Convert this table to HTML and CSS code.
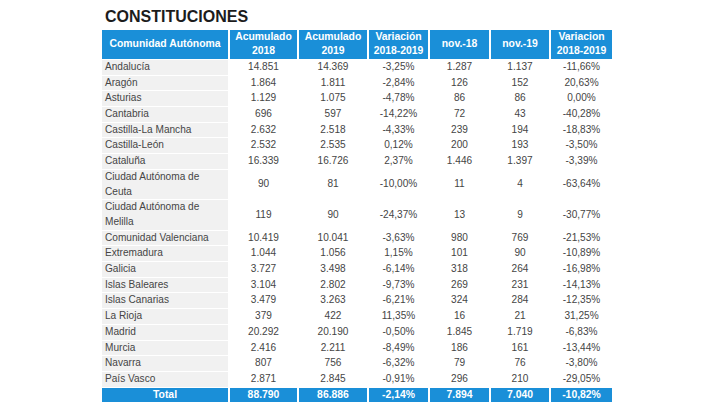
FILE: index.html
```html
<!DOCTYPE html>
<html lang="es">
<head>
<meta charset="utf-8">
<link rel="stylesheet" href="styles.css">
</head>
<body>
<div class="page">
  <h1 class="title">CONSTITUCIONES</h1>
  <table class="data">
    <colgroup>
      <col class="c-name"><col class="c-acc18"><col class="c-acc19"><col class="c-var"><col class="c-m18"><col class="c-m19"><col class="c-var2">
    </colgroup>
    <thead>
      <tr>
        <th>Comunidad Autónoma</th>
        <th>Acumulado<br>2018</th>
        <th>Acumulado<br>2019</th>
        <th>Variación<br>2018-2019</th>
        <th>nov.-18</th>
        <th>nov.-19</th>
        <th>Variacion<br>2018-2019</th>
      </tr>
    </thead>
    <tbody>
      <tr><td class="name">Andalucía</td><td>14.851</td><td>14.369</td><td>-3,25%</td><td>1.287</td><td>1.137</td><td>-11,66%</td></tr>
      <tr><td class="name">Aragón</td><td>1.864</td><td>1.811</td><td>-2,84%</td><td>126</td><td>152</td><td>20,63%</td></tr>
      <tr><td class="name">Asturias</td><td>1.129</td><td>1.075</td><td>-4,78%</td><td>86</td><td>86</td><td>0,00%</td></tr>
      <tr><td class="name">Cantabria</td><td>696</td><td>597</td><td>-14,22%</td><td>72</td><td>43</td><td>-40,28%</td></tr>
      <tr><td class="name">Castilla-La Mancha</td><td>2.632</td><td>2.518</td><td>-4,33%</td><td>239</td><td>194</td><td>-18,83%</td></tr>
      <tr><td class="name">Castilla-León</td><td>2.532</td><td>2.535</td><td>0,12%</td><td>200</td><td>193</td><td>-3,50%</td></tr>
      <tr><td class="name">Cataluña</td><td>16.339</td><td>16.726</td><td>2,37%</td><td>1.446</td><td>1.397</td><td>-3,39%</td></tr>
      <tr><td class="name">Ciudad Autónoma de<br>Ceuta</td><td>90</td><td>81</td><td>-10,00%</td><td>11</td><td>4</td><td>-63,64%</td></tr>
      <tr><td class="name">Ciudad Autónoma de<br>Melilla</td><td>119</td><td>90</td><td>-24,37%</td><td>13</td><td>9</td><td>-30,77%</td></tr>
      <tr><td class="name">Comunidad Valenciana</td><td>10.419</td><td>10.041</td><td>-3,63%</td><td>980</td><td>769</td><td>-21,53%</td></tr>
      <tr><td class="name">Extremadura</td><td>1.044</td><td>1.056</td><td>1,15%</td><td>101</td><td>90</td><td>-10,89%</td></tr>
      <tr><td class="name">Galicia</td><td>3.727</td><td>3.498</td><td>-6,14%</td><td>318</td><td>264</td><td>-16,98%</td></tr>
      <tr><td class="name">Islas Baleares</td><td>3.104</td><td>2.802</td><td>-9,73%</td><td>269</td><td>231</td><td>-14,13%</td></tr>
      <tr><td class="name">Islas Canarias</td><td>3.479</td><td>3.263</td><td>-6,21%</td><td>324</td><td>284</td><td>-12,35%</td></tr>
      <tr><td class="name">La Rioja</td><td>379</td><td>422</td><td>11,35%</td><td>16</td><td>21</td><td>31,25%</td></tr>
      <tr><td class="name">Madrid</td><td>20.292</td><td>20.190</td><td>-0,50%</td><td>1.845</td><td>1.719</td><td>-6,83%</td></tr>
      <tr><td class="name">Murcia</td><td>2.416</td><td>2.211</td><td>-8,49%</td><td>186</td><td>161</td><td>-13,44%</td></tr>
      <tr><td class="name">Navarra</td><td>807</td><td>756</td><td>-6,32%</td><td>79</td><td>76</td><td>-3,80%</td></tr>
      <tr><td class="name">País Vasco</td><td>2.871</td><td>2.845</td><td>-0,91%</td><td>296</td><td>210</td><td>-29,05%</td></tr>
    </tbody>
    <tfoot>
      <tr><td>Total</td><td>88.790</td><td>86.886</td><td>-2,14%</td><td>7.894</td><td>7.040</td><td>-10,82%</td></tr>
    </tfoot>
  </table>
</div>
</body>
</html>
```
FILE: styles.css
```css
html, body {
  margin: 0;
  padding: 0;
  background: #ffffff;
}

.page {
  padding: 7px 0 0 100px;
  font-family: "Liberation Sans", Arial, sans-serif;
}

.title {
  margin: 0 0 2.5px 0;
  padding-left: 5px;
  font-size: 16px;
  line-height: 19px;
  font-weight: bold;
  color: #1c1c1c;
}

.data {
  border-collapse: separate;
  border-spacing: 2px 1px;
  table-layout: fixed;
  width: 514px;
  font-size: 10.1px;
  color: #454545;
}

.c-name { width: 126px; }
.c-acc18 { width: 67px; }
.c-acc19 { width: 68px; }
.c-var { width: 59px; }
.c-m18 { width: 59px; }
.c-m19 { width: 58px; }
.c-var2 { width: 61px; }

.data th,
.data td {
  padding: 0;
  line-height: 14.7px;
  text-align: center;
  vertical-align: middle;
  white-space: nowrap;
}

.data th {
  background: #1a8fd8;
  color: #ffffff;
  font-weight: bold;
  font-size: 10.4px;
}

.data td.name {
  text-align: left;
  padding-left: 3px;
  background: #f1f1f1;
}

.data tfoot td {
  background: #1a8fd8;
  color: #ffffff;
  font-weight: bold;
  font-size: 10.4px;
}
```
